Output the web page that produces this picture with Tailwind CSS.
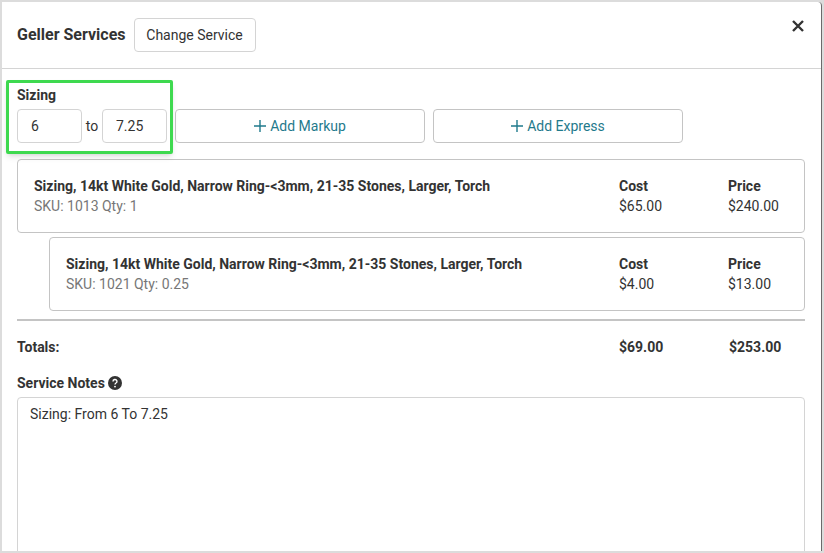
<!DOCTYPE html>
<html lang="en">
<head>
    <meta charset="UTF-8">
    <title>Geller Services</title>
    <script src="https://cdn.jsdelivr.net/npm/@tailwindcss/browser@4"></script>
</head>
<body class="h-[553px] w-[824px] overflow-hidden bg-[#dcdcdc] font-['Roboto',sans-serif] text-sm text-[#212529]">

    <div class="relative ml-[2px] mt-[2px] h-[549px] w-[820px] overflow-hidden rounded-tr-sm border-r border-[#6b6b6b] bg-white">

        <!-- Header -->
        <div class="flex h-[67px] items-center border-b border-[#d4d4d4] pl-[15px] pr-[17px]">
            <h2 class="text-base leading-6 font-bold text-[#333]">Geller Services</h2>
            <button class="ml-2 h-[34px] w-[122px] rounded border border-[#d4d4d4] bg-white text-sm text-[#333]">Change Service</button>
            <button class="mb-[18px] ml-auto text-[#333]">
                <svg width="12" height="12" viewBox="0 0 12 12" fill="none" stroke="currentColor" stroke-width="2.4"><path d="M1 1l10 10M11 1L1 11"/></svg>
            </button>
        </div>

        <!-- Green highlight -->
        <div class="absolute left-[4px] top-[78px] h-[74px] w-[167px] rounded-[2px] border-[3px] border-[#3ed94f] shadow-md"></div>

        <div class="w-[818px] px-[15px]">
            <!-- Sizing row -->
            <div class="pt-[18px]">
                <div class="text-sm leading-[17px] font-bold text-[#333]">Sizing</div>
                <div class="mt-[5px] flex h-[34px] items-center">
                    <input value="6" class="h-full w-[65px] rounded border border-[#d4d4d4] pl-[13px] text-sm text-[#333]">
                    <span class="w-[20px] text-center text-sm text-[#333]">to</span>
                    <input value="7.25" class="h-full w-[65px] rounded border border-[#d4d4d4] pl-[13px] text-sm text-[#333]">
                    <button class="ml-2 flex h-full w-[250px] items-center justify-center gap-1 rounded border border-[#c4c4c4] text-sm text-[#1f7a8c]">
                        <svg width="12" height="12" viewBox="0 0 12 12" fill="none" stroke="currentColor" stroke-width="1.4"><path d="M6 0v12M0 6h12"/></svg>
                        Add Markup
                    </button>
                    <button class="ml-2 flex h-full w-[250px] items-center justify-center gap-1 rounded border border-[#c4c4c4] text-sm text-[#1f7a8c]">
                        <svg width="12" height="12" viewBox="0 0 12 12" fill="none" stroke="currentColor" stroke-width="1.4"><path d="M6 0v12M0 6h12"/></svg>
                        Add Express
                    </button>
                </div>
            </div>

            <!-- Line items -->
            <div class="mt-4 flex h-[74px] items-center rounded border border-[#c4c4c4] pl-4">
                <div class="w-[585px]">
                    <div class="leading-5 font-bold text-[#333]">Sizing, 14kt White Gold, Narrow Ring-&lt;3mm, 21-35 Stones, Larger, Torch</div>
                    <div class="leading-5 text-[#777]">SKU: 1013 Qty: 1</div>
                </div>
                <div class="w-[109px] leading-5 text-[#333]"><div class="font-bold">Cost</div><div>$65.00</div></div>
                <div class="leading-5 text-[#333]"><div class="font-bold">Price</div><div>$240.00</div></div>
            </div>

            <div class="mt-1 ml-8 flex h-[74px] items-center rounded border border-[#c4c4c4] pl-4">
                <div class="w-[553px]">
                    <div class="leading-5 font-bold text-[#333]">Sizing, 14kt White Gold, Narrow Ring-&lt;3mm, 21-35 Stones, Larger, Torch</div>
                    <div class="leading-5 text-[#777]">SKU: 1021 Qty: 0.25</div>
                </div>
                <div class="w-[109px] leading-5 text-[#333]"><div class="font-bold">Cost</div><div>$4.00</div></div>
                <div class="leading-5 text-[#333]"><div class="font-bold">Price</div><div>$13.00</div></div>
            </div>

            <!-- Totals -->
            <div class="mt-2 h-[2px] w-[788px] bg-[#c4c4c4]"></div>
            <div class="mt-4 flex h-5 items-center leading-5 font-bold text-[#333]">
                <div class="w-[602px]">Totals:</div>
                <div class="w-[110px]">$69.00</div>
                <div>$253.00</div>
            </div>

            <!-- Notes -->
            <div class="mt-4 flex h-5 items-center gap-[3px] font-bold text-[#333]">
                Service Notes
                <svg width="14" height="14" viewBox="0 0 14 14"><circle cx="7" cy="7" r="7" fill="#333"/><path d="M5 5.4a2 1.9 0 1 1 3 1.6c-.7.4-1 .7-1 1.5" fill="none" stroke="#fff" stroke-width="1.4"/><circle cx="7" cy="10.6" r=".9" fill="#fff"/></svg>
            </div>
            <textarea class="mt-1 h-[200px] w-[788px] resize-none rounded border border-[#d4d4d4] px-3 py-[6px] text-sm leading-5 text-[#333]">Sizing: From 6 To 7.25</textarea>
        </div>
    </div>
</body>
</html>
